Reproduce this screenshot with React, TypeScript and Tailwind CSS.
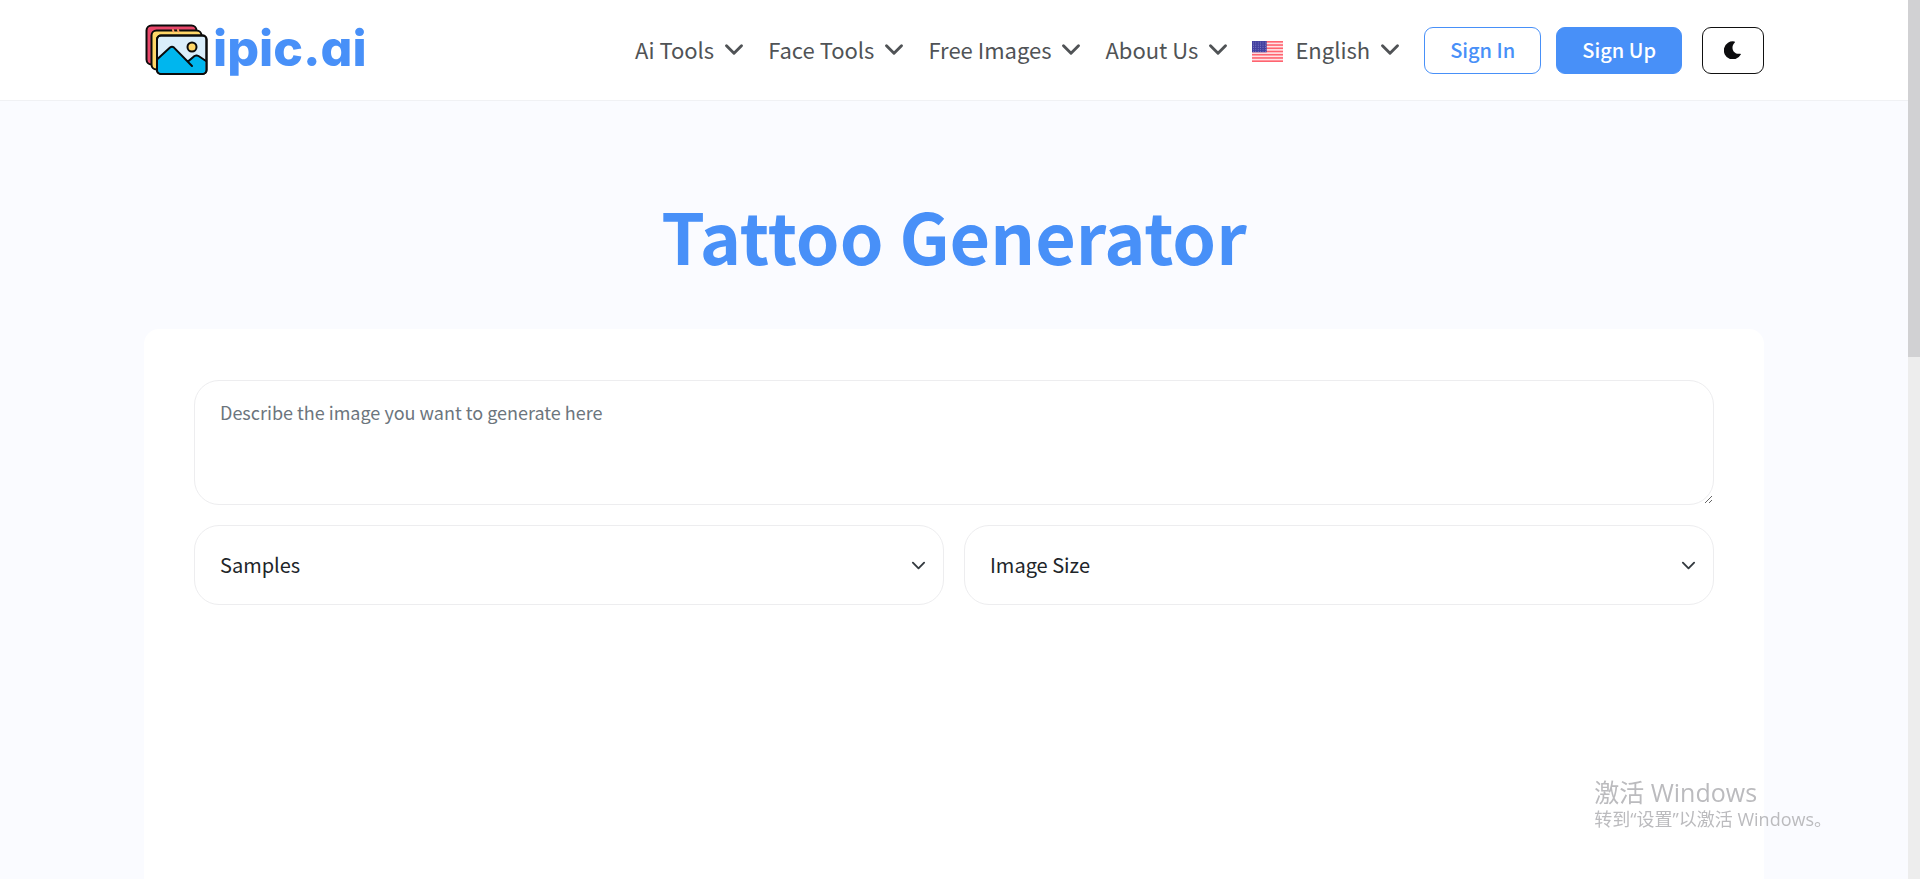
import React from "react";

const NAV = ["Ai Tools", "Face Tools", "Free Images", "About Us"];

function Chevron() {
  return (
    <svg viewBox="0 0 20 20" className="size-5 shrink-0" fill="none" stroke="currentColor" strokeWidth="2.9" strokeLinecap="round" strokeLinejoin="round" aria-hidden="true">
      <path d="M2.5 6.800 10 14.200l7.500-7.400" />
    </svg>
  );
}

function Flag() {
  const stripes = [0, 1, 2, 3, 4, 5, 6];
  const rows = [0, 1, 2, 3, 4, 5];
  return (
    <svg viewBox="0 0 31 21" className="mt-1 h-[21px] w-[31px] shrink-0" role="img" aria-label="United States">
      <rect width="31" height="21" fill="#ffe4e6" />
      {stripes.map((i) => (
        <rect key={i} y={i * 3.23} width="31" height="1.62" fill="#ff6470" />
      ))}
      <rect width="14.700" height="11.300" fill="#4340a0" />
      {rows.map((r) =>
        rows.map((c) => <circle key={`${r}-${c}`} cx={1.4 + c * 2.400} cy={1.1 + r * 1.820} r="0.450" fill="#a9a8dc" />)
      )}
    </svg>
  );
}

function LogoMark() {
  return (
    <svg viewBox="0 0 64 52" className="h-[52px] w-16 shrink-0" stroke="#0b0b0b" strokeWidth="2" strokeLinejoin="round" strokeLinecap="round" aria-hidden="true">
      <rect x="2.500" y="1.500" width="50" height="39" rx="5" fill="#e9486b" />
      <rect x="7.500" y="6.500" width="50" height="39" rx="5" fill="#ffd768" />
      <path d="M29 6l.5 1.500M34 6l.5 1.500" stroke="#ff9a62" />
      <rect x="13" y="11.500" width="49.500" height="38.500" rx="4" fill="#daeefb" />
      <path d="M14 34.500 26 23.600q2-1.700 4 0L43.500 36.500l7-5q2-1.400 4 0l7 5V46q0 3-3 3H17q-3 0-3-3z" fill="#00b6ee" stroke="none" />
      <path d="M13.500 35 26 23.600q2-1.700 4 0L48 42M44 37.500l6.500-5.500q2-1.200 4 0l7.500 5" fill="none" />
      <rect x="13" y="11.500" width="49.500" height="38.500" rx="4" fill="none" />
      <circle cx="48" cy="23" r="4.500" fill="#ffd768" />
    </svg>
  );
}

function SelectBox({ label }: { label: string }) {
  return (
    <div className="grid flex-1 items-center">
      <select
        aria-label={label}
        className="col-start-1 row-start-1 h-20 w-full appearance-none rounded-[25px] border border-[#ededef] bg-white px-[25px] text-[20px] text-[#212529]"
      >
        <option>{label}</option>
      </select>
      <svg viewBox="0 0 16 16" className="pointer-events-none col-start-1 row-start-1 mr-[18px] size-[15px] justify-self-end" fill="none" stroke="#343a40" strokeWidth="2" strokeLinecap="round" strokeLinejoin="round" aria-hidden="true">
        <path d="m2 5 6 6 6-6" />
      </svg>
    </div>
  );
}

export default function App() {
  return (
    <div className="flex h-screen overflow-hidden bg-[#fafbff] font-['Noto_Sans_CJK_SC','Noto_Sans',sans-serif]">
      <div className="flex min-w-0 flex-1 flex-col">
        <header className="border-b border-[#f0f1f4] bg-white">
          <div className="mx-auto flex h-[100px] max-w-[1620px] items-center justify-between">
            <a href="#" className="flex items-center gap-[5px] text-[#4890f8]">
              <LogoMark />
              <span className="pb-1 font-['Inter',sans-serif] text-[50px] leading-[50px] font-extrabold [font-feature-settings:'cv11']">ipic.ai</span>
            </a>
            <div className="flex items-center">
              <nav className="flex items-center gap-6 pb-0.5 text-[22px] text-[#505356]">
                {NAV.map((item) => (
                  <a key={item} href="#" className="flex items-center gap-2.5 whitespace-nowrap">
                    {item}
                    <Chevron />
                  </a>
                ))}
                <a href="#" className="flex items-center whitespace-nowrap">
                  <Flag />
                  <span className="mr-2.5 ml-3">English</span>
                  <Chevron />
                </a>
              </nav>
              <button className="ml-6 h-[47px] rounded-[9px] border border-[#4890f8] bg-white px-[25px] text-[20px] leading-8 font-medium text-[#4890f8]">Sign In</button>
              <button className="ml-[15px] h-[47px] rounded-[9px] border border-[#4890f8] bg-[#4890f8] px-[25px] text-[20px] leading-8 font-medium text-white">Sign Up</button>
              <button aria-label="Dark mode" className="ml-5 flex h-[47px] w-[62px] items-center justify-center rounded-[9px] border border-[#111111] bg-white">
                <svg viewBox="0 0 18 18" className="size-[18px]" fill="#0c0c0e" aria-hidden="true">
                  <path d="M10.300.5A9 9 0 1 0 16.800 13.600c.4-.6-.1-1-.7-.9C9.500 13.800 5.800 6.500 10.800 1.500c.4-.4.2-1-.5-1z" />
                </svg>
              </button>
            </div>
          </div>
        </header>
        <main className="mx-auto flex min-h-0 w-full max-w-[1620px] flex-1 flex-col">
          <h1 className="pt-[82px] pb-[42px] text-center text-[70px] leading-[104px] font-bold text-[#4890f8]">Tattoo Generator</h1>
          <form className="flex flex-1 flex-col gap-5 rounded-t-[15px] bg-white px-[50px] pt-[51px]">
            <textarea
              aria-label="Image description"
              placeholder="Describe the image you want to generate here"
              className="block h-[125px] w-full resize-y rounded-[25px] border border-[#ededef] bg-white px-[25px] py-[18px] text-[18px] leading-[27px] text-[#212529] placeholder:text-[#6c757d]"
            />
            <div className="flex gap-5">
              <SelectBox label="Samples" />
              <SelectBox label="Image Size" />
            </div>
          </form>
        </main>
      </div>
      <div className="w-3 shrink-0 bg-[#ededed]" aria-hidden="true">
        <div className="h-[357px] bg-[#d1d1d3]" />
      </div>
      <div className="pointer-events-none fixed right-[88px] bottom-[48px] font-['Open_Sans','Noto_Sans_CJK_SC',sans-serif] text-[#bbbbbe]">
        <p className="text-[25px] leading-[30px]">激活 Windows</p>
        <p className="text-[18px] leading-6">转到“设置”以激活 Windows。</p>
      </div>
    </div>
  );
}
